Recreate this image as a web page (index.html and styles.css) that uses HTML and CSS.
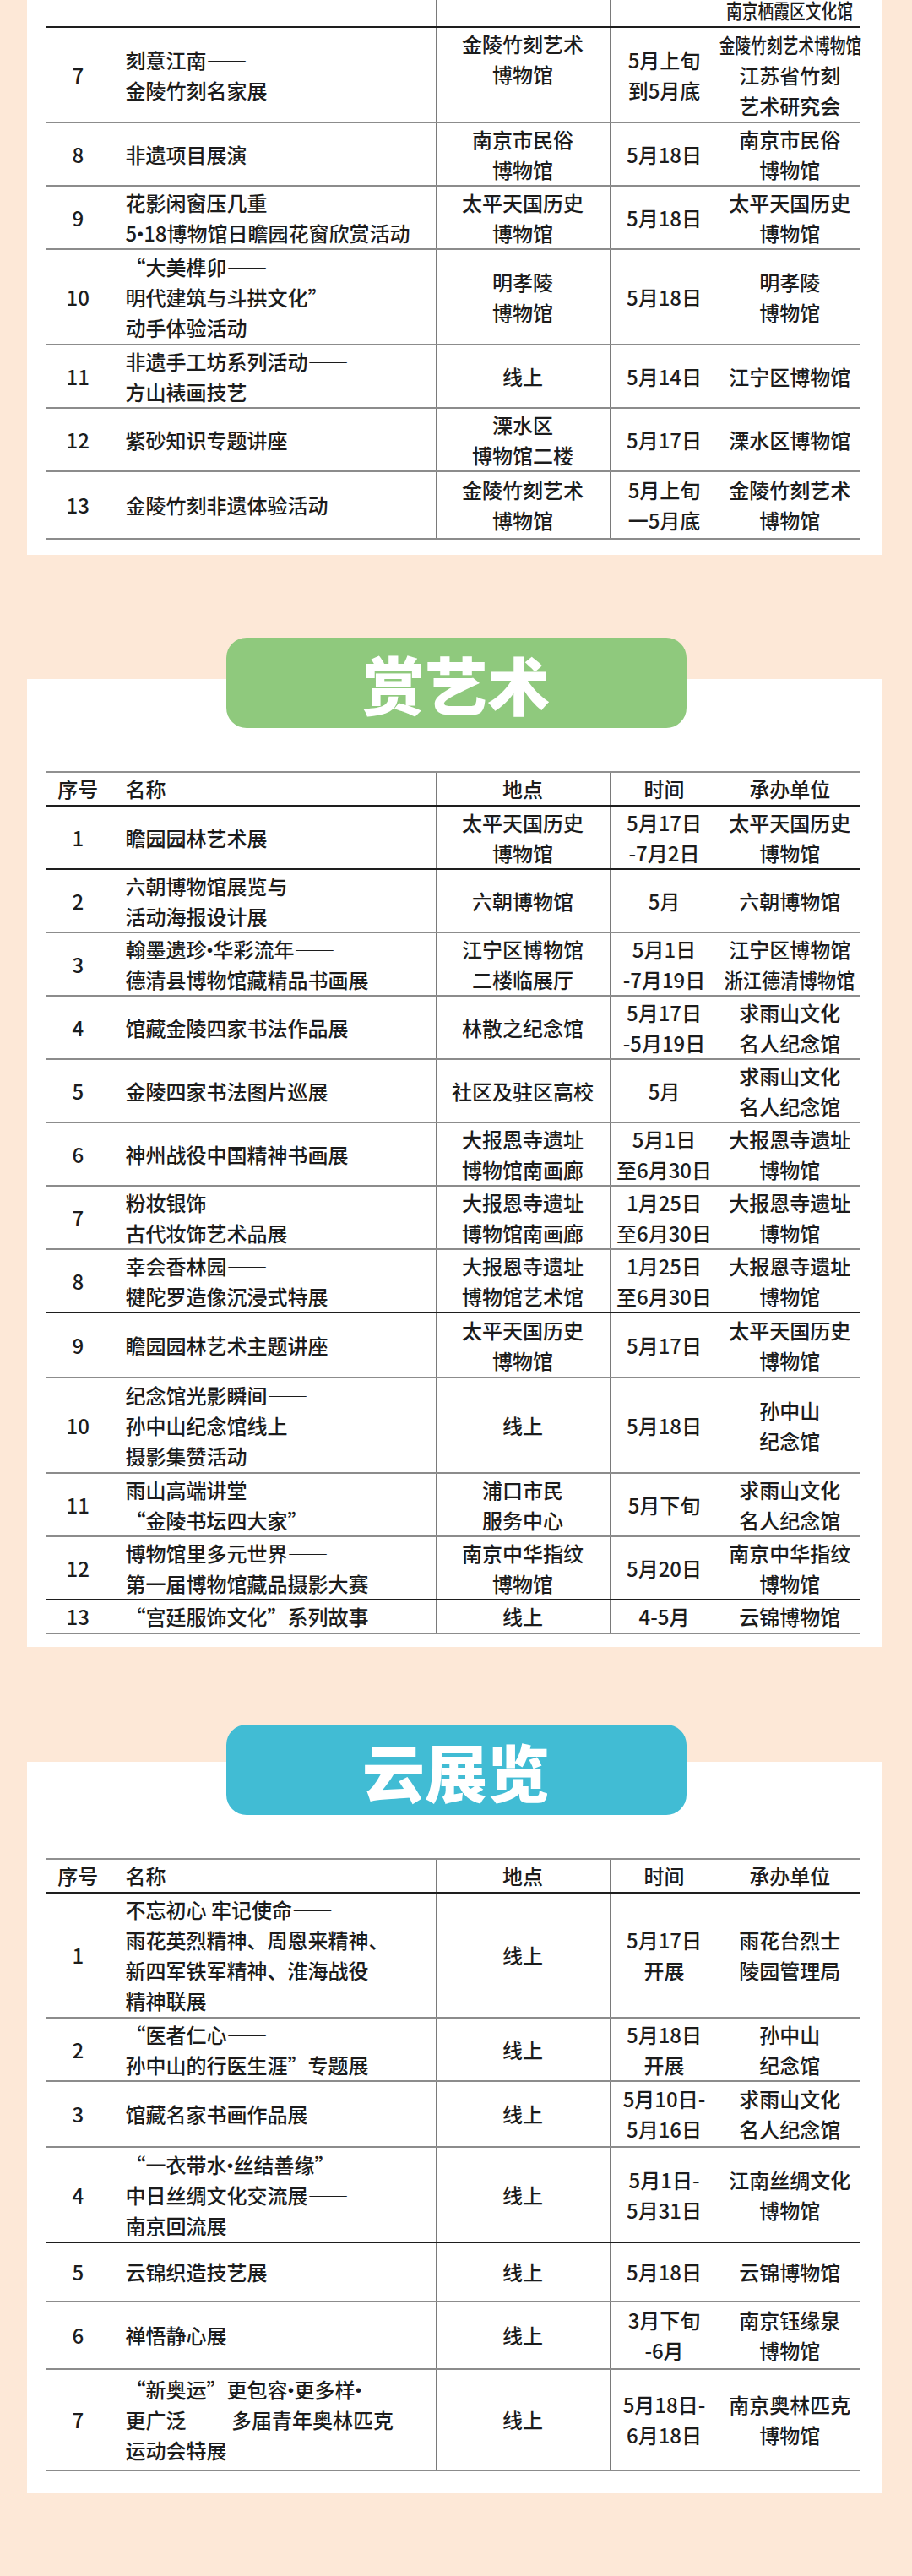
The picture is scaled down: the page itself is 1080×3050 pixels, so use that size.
FILE: index.html
```html
<!DOCTYPE html>
<html lang="zh-CN">
<head>
<meta charset="utf-8">
<title>5·18 博物馆日活动</title>
<link rel="stylesheet" href="styles.css">
</head>
<body>
<div class="page">

  <section class="card card-first">
    <table class="grid">
      <colgroup><col class="c-no"><col class="c-name"><col class="c-place"><col class="c-time"><col class="c-org"></colgroup>
      <tbody>
        <tr class="r3">
          <td>6</td><td class="name">栖霞非遗展示活动</td><td>栖霞区文化馆</td><td class="lift">5月<br>18日</td>
          <td>南京栖霞区<br>文化馆<br><span class="sq sq8">南京栖霞区文化馆</span></td>
        </tr>
        <tr class="r3 dark">
          <td>7</td><td class="name">刻意江南——<br>金陵竹刻名家展</td><td class="top">金陵竹刻艺术<br>博物馆</td><td>5月上旬<br>到5月底</td>
          <td><span class="sq sq9">金陵竹刻艺术博物馆</span><br>江苏省竹刻<br>艺术研究会</td>
        </tr>
        <tr>
          <td>8</td><td class="name">非遗项目展演</td><td>南京市民俗<br>博物馆</td><td>5月18日</td><td>南京市民俗<br>博物馆</td>
        </tr>
        <tr>
          <td>9</td><td class="name">花影闲窗压几重——<br>5<span class="dot">·</span>18博物馆日瞻园花窗欣赏活动</td><td>太平天国历史<br>博物馆</td><td>5月18日</td><td>太平天国历史<br>博物馆</td>
        </tr>
        <tr class="r3">
          <td>10</td><td class="name">“大美榫卯——<br>明代建筑与斗拱文化”<br>动手体验活动</td><td>明孝陵<br>博物馆</td><td>5月18日</td><td>明孝陵<br>博物馆</td>
        </tr>
        <tr>
          <td>11</td><td class="name">非遗手工坊系列活动——<br>方山裱画技艺</td><td>线上</td><td>5月14日</td><td>江宁区博物馆</td>
        </tr>
        <tr>
          <td>12</td><td class="name">紫砂知识专题讲座</td><td>溧水区<br>博物馆二楼</td><td>5月17日</td><td>溧水区博物馆</td>
        </tr>
        <tr class="h80">
          <td>13</td><td class="name">金陵竹刻非遗体验活动</td><td>金陵竹刻艺术<br>博物馆</td><td>5月上旬<br>一5月底</td><td>金陵竹刻艺术<br>博物馆</td>
        </tr>
      </tbody>
    </table>
  </section>

  <section class="section section-art">
    <div class="badge badge-green">赏艺术</div>
    <div class="card">
      <table class="grid">
        <colgroup><col class="c-no"><col class="c-name"><col class="c-place"><col class="c-time"><col class="c-org"></colgroup>
        <thead>
          <tr class="head"><th>序号</th><th class="name">名称</th><th>地点</th><th>时间</th><th>承办单位</th></tr>
        </thead>
        <tbody>
          <tr class="dark">
            <td>1</td><td class="name">瞻园园林艺术展</td><td>太平天国历史<br>博物馆</td><td>5月17日<br>-7月2日</td><td>太平天国历史<br>博物馆</td>
          </tr>
          <tr class="dark">
            <td>2</td><td class="name">六朝博物馆展览与<br>活动海报设计展</td><td>六朝博物馆</td><td>5月</td><td>六朝博物馆</td>
          </tr>
          <tr>
            <td>3</td><td class="name">翰墨遗珍<span class="dot">·</span>华彩流年——<br>德清县博物馆藏精品书画展</td><td>江宁区博物馆<br>二楼临展厅</td><td>5月1日<br>-7月19日</td><td>江宁区博物馆<br><span class="sq sq7">浙江德清博物馆</span></td>
          </tr>
          <tr>
            <td>4</td><td class="name">馆藏金陵四家书法作品展</td><td>林散之纪念馆</td><td>5月17日<br>-5月19日</td><td>求雨山文化<br>名人纪念馆</td>
          </tr>
          <tr>
            <td>5</td><td class="name">金陵四家书法图片巡展</td><td>社区及驻区高校</td><td>5月</td><td>求雨山文化<br>名人纪念馆</td>
          </tr>
          <tr>
            <td>6</td><td class="name">神州战役中国精神书画展</td><td>大报恩寺遗址<br>博物馆南画廊</td><td>5月1日<br>至6月30日</td><td>大报恩寺遗址<br>博物馆</td>
          </tr>
          <tr>
            <td>7</td><td class="name">粉妆银饰——<br>古代妆饰艺术品展</td><td>大报恩寺遗址<br>博物馆南画廊</td><td>1月25日<br>至6月30日</td><td>大报恩寺遗址<br>博物馆</td>
          </tr>
          <tr>
            <td>8</td><td class="name">幸会香林园——<br>犍陀罗造像沉浸式特展</td><td>大报恩寺遗址<br>博物馆艺术馆</td><td>1月25日<br>至6月30日</td><td>大报恩寺遗址<br>博物馆</td>
          </tr>
          <tr class="dark h77">
            <td>9</td><td class="name">瞻园园林艺术主题讲座</td><td>太平天国历史<br>博物馆</td><td>5月17日</td><td>太平天国历史<br>博物馆</td>
          </tr>
          <tr class="r3">
            <td>10</td><td class="name">纪念馆光影瞬间——<br>孙中山纪念馆线上<br>摄影集赞活动</td><td>线上</td><td>5月18日</td><td>孙中山<br>纪念馆</td>
          </tr>
          <tr>
            <td>11</td><td class="name">雨山高端讲堂<br>“金陵书坛四大家”</td><td>浦口市民<br>服务中心</td><td>5月下旬</td><td>求雨山文化<br>名人纪念馆</td>
          </tr>
          <tr>
            <td>12</td><td class="name">博物馆里多元世界——<br>第一届博物馆藏品摄影大赛</td><td>南京中华指纹<br>博物馆</td><td>5月20日</td><td>南京中华指纹<br>博物馆</td>
          </tr>
          <tr class="dark r1">
            <td>13</td><td class="name">“宫廷服饰文化”系列故事</td><td>线上</td><td>4-5月</td><td>云锦博物馆</td>
          </tr>
        </tbody>
      </table>
    </div>
  </section>

  <section class="section section-cloud">
    <div class="badge badge-blue">云展览</div>
    <div class="card card-last">
      <table class="grid">
        <colgroup><col class="c-no"><col class="c-name"><col class="c-place"><col class="c-time"><col class="c-org"></colgroup>
        <thead>
          <tr class="head"><th>序号</th><th class="name">名称</th><th>地点</th><th>时间</th><th>承办单位</th></tr>
        </thead>
        <tbody>
          <tr class="dark r4">
            <td>1</td><td class="name">不忘初心 牢记使命——<br>雨花英烈精神、周恩来精神、<br>新四军铁军精神、淮海战役<br>精神联展</td><td>线上</td><td>5月17日<br>开展</td><td>雨花台烈士<br>陵园管理局</td>
          </tr>
          <tr>
            <td>2</td><td class="name">“医者仁心——<br>孙中山的行医生涯”专题展</td><td>线上</td><td>5月18日<br>开展</td><td>孙中山<br>纪念馆</td>
          </tr>
          <tr class="h78">
            <td>3</td><td class="name">馆藏名家书画作品展</td><td>线上</td><td>5月10日-<br>5月16日</td><td>求雨山文化<br>名人纪念馆</td>
          </tr>
          <tr class="r3">
            <td>4</td><td class="name">“一衣带水<span class="dot">·</span>丝结善缘”<br>中日丝绸文化交流展——<br>南京回流展</td><td>线上</td><td>5月1日-<br>5月31日</td><td>江南丝绸文化<br>博物馆</td>
          </tr>
          <tr class="h70 dark">
            <td>5</td><td class="name">云锦织造技艺展</td><td>线上</td><td>5月18日</td><td>云锦博物馆</td>
          </tr>
          <tr class="h80">
            <td>6</td><td class="name">禅悟静心展</td><td>线上</td><td>3月下旬<br>-6月</td><td>南京钰缘泉<br>博物馆</td>
          </tr>
          <tr class="h120">
            <td>7</td><td class="name">“新奥运”更包容<span class="dot">·</span>更多样<span class="dot">·</span><br>更广泛 ——多届青年奥林匹克<br>运动会特展</td><td>线上</td><td>5月18日-<br>6月18日</td><td>南京奥林匹克<br>博物馆</td>
          </tr>
        </tbody>
      </table>
    </div>
  </section>

</div>
</body>
</html>
```

FILE: styles.css
```css
html, body {
  margin: 0;
  padding: 0;
}

body {
  background: #fde8d7;
  color: #1c1c1c;
  font-family: "Noto Sans CJK SC", "Noto Sans", sans-serif;
}

.page {
  width: 1080px;
  min-height: 3050px;
  overflow: hidden;
}

.card {
  background: #ffffff;
  margin: 0 35px 0 32px;
  padding: 0 26px 0 22px;
}

.card-first {
  margin-top: -82px;
  padding-bottom: 18px;
}

.section-art {
  padding-top: 98px;
}

.section-art .card {
  margin-top: -58px;
  padding-top: 109px;
  padding-bottom: 15px;
}

.section-cloud {
  padding-top: 92px;
}

.section-cloud .card {
  margin-top: -63px;
  padding-top: 114px;
  padding-bottom: 26px;
}

.badge {
  position: relative;
  z-index: 1;
  width: 545px;
  height: 107px;
  margin: 0 auto;
  border-radius: 24px;
  display: flex;
  align-items: center;
  justify-content: center;
  color: #ffffff;
  font-family: "Noto Sans CJK SC", sans-serif;
  font-size: 74px;
  font-weight: 900;
  line-height: 1;
  letter-spacing: 0;
}

.badge-green {
  background: #8fc97d;
}

.badge-blue {
  background: #41bcd4;
}

/* table */
.grid {
  width: 965px;
  border-collapse: collapse;
  table-layout: fixed;
}

.c-no { width: 77px; }
.c-name { width: 385px; }
.c-place { width: 206px; }
.c-time { width: 129px; }
.c-org { width: 168px; }

.grid tr { height: 75px; }
.grid tr.head,
.grid tr.r1 { height: 40px; }
.grid tr.r3 { height: 113px; }
.grid tr.r4 { height: 148px; }
.grid tr.h70 { height: 70px; }
.grid tr.h77 { height: 77px; }
.grid tr.h78 { height: 78px; }
.grid tr.h80 { height: 80px; }
.grid tr.h120 { height: 120px; }

.grid td,
.grid th {
  font-size: 24px;
  font-weight: 500;
  line-height: 36px;
  padding: 0;
  white-space: nowrap;
  text-align: center;
  vertical-align: middle;
  border-top: 2px solid #8c8c8c;
  border-left: 1px solid #7a7a7a;
}

.grid td:first-child,
.grid th:first-child {
  border-left: none;
}

.grid tbody tr:last-child td {
  border-bottom: 2px solid #8c8c8c;
}

.grid .head th {
  border-top-color: #909090;
}

.grid tr.dark td {
  border-top-color: #1e1e1e;
}

.grid .name {
  text-align: left;
  padding-left: 17px;
}

.grid td.top {
  vertical-align: top;
  padding-top: 1px;
}

.grid td.lift {
  padding-bottom: 18px;
}

/* narrow middle dot */
.dot {
  margin: 0 -8px;
}

/* horizontally condensed text for long unit names */
.sq {
  display: inline-block;
  transform-origin: center center;
}

.sq9 {
  transform: scaleX(0.78);
  margin: 0 -24px;
}

.sq8 {
  transform: scaleX(0.78);
  margin: 0 -21px;
}

.sq7 {
  transform: scaleX(0.92);
  margin: 0 -7px;
}
```
